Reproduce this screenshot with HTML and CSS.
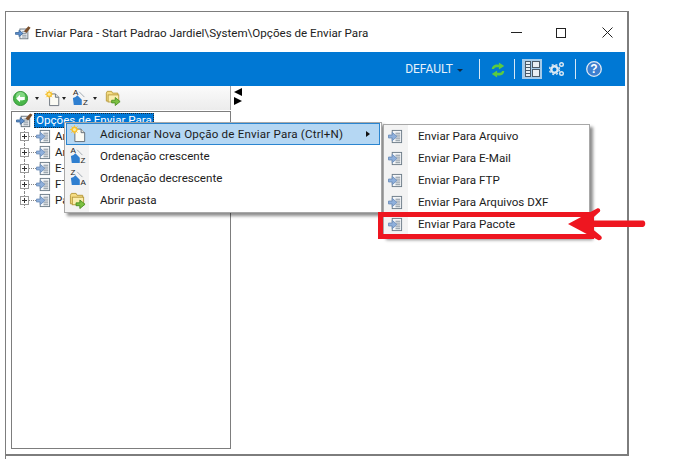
FILE: index.html
```html
<!DOCTYPE html>
<html lang="pt">
<head>
<meta charset="utf-8">
<title>Enviar Para</title>
<link rel="stylesheet" href="styles.css">
</head>
<body>
<svg class="defs" width="0" height="0">
  <defs>
    <symbol id="send" viewBox="0 0 16 16">
      <rect x="4.500" y="1.500" width="10" height="13" fill="#f4f6f8" stroke="#6d7c88"/>
      <path d="M8 4.500h5M8 6.500h5M9 8.500h4M8 10.500h5M8 12.500h5" stroke="#7f8c98"/>
      <path d="M0.500 6.500h4v-3l5 4.500-5 4.500v-3h-4z" fill="#8fb0dc" stroke="#6f90bc"/>
    </symbol>
    <symbol id="root" viewBox="0 0 18 18">
      <rect x="5.500" y="4.500" width="9" height="11" fill="#eef1f4" stroke="#66727c"/>
      <path d="M8 7.500h5M8 9.500h5M8 11.500h5M8 13.500h5" stroke="#7f8c98"/>
      <path d="M0.500 8.500h4v-2.500l4.500 3.500-4.500 3.500v-2.500h-4z" fill="#5f90cf" stroke="#3f6c9f"/>
      <path d="M10 7l5-5.500 2.500 1.500-4.500 6z" fill="#7a4f2c"/>
    </symbol>
    <symbol id="new" viewBox="0 0 18 20">
      <path d="M5.500 4.500h7l4 4v10h-11z" fill="#fbfbf4" stroke="#5a6470"/>
      <path d="M12.500 4.500v4h4" fill="#e3e3da" stroke="#5a6470"/>
      <circle cx="5" cy="5" r="3.500" fill="#f6c12f"/>
      <path d="M5 0v10M0 5h10M1.500 1.500l7 7M8.500 1.500l-7 7" stroke="#f6c12f"/>
      <circle cx="5" cy="5" r="1.800" fill="#fdeb9a"/>
    </symbol>
    <symbol id="folder" viewBox="0 0 18 18">
      <path d="M1.500 3.500l1-2h5l1 2h6v9h-13z" fill="#f6dd83" stroke="#b79a3a"/>
      <rect x="3.500" y="5.500" width="12" height="8" fill="#fbeeae" stroke="#b79a3a"/>
      <path d="M7.500 11.500h4v-3l5.500 4.500-5.500 4.500v-3h-4z" fill="#7cc142" stroke="#4d8f23"/>
    </symbol>
    <symbol id="back" viewBox="0 0 16 16">
      <circle cx="8" cy="8" r="7.500" fill="#49b649" stroke="#2f8f35"/>
      <circle cx="8" cy="6" r="5" fill="#84d884"/>
      <path d="M3.500 8l4-4v2.500h5v3h-5v2.500z" fill="#fff"/>
    </symbol>
    <symbol id="refresh" viewBox="0 0 18 18">
      <path d="M2 8c0-4 4-6 8-5V0.500l6 4-6 4V6C7 5.500 5 6 4.500 8z" fill="#5ccb3f"/>
      <path d="M16 10c0 4-4 6-8 5v2.500l-6-4 6-4V12c3 .5 5 0 5.500-2z" fill="#5ccb3f"/>
    </symbol>
    <symbol id="layout" viewBox="0 0 20 20">
      <rect width="20" height="20" fill="#a6cbe9"/>
      <rect x="3.500" y="2.500" width="5" height="15" fill="#e8eef3" stroke="#4a5a68"/>
      <rect x="10.500" y="2.500" width="7" height="6" fill="#e8eef3" stroke="#4a5a68"/>
      <rect x="10.500" y="10.500" width="7" height="7" fill="#e8eef3" stroke="#4a5a68"/>
      <path d="M4 5.500h4M4 8.500h4M4 11.500h4M4 14.500h4" stroke="#4a5a68"/>
    </symbol>
    <symbol id="gears" viewBox="0 0 16 16">
      <circle cx="5.500" cy="8.500" r="3.200" fill="none" stroke="#dbe8f2" stroke-width="2.400"/>
      <circle cx="5.500" cy="8.500" r="5" fill="none" stroke="#dbe8f2" stroke-width="1.400" stroke-dasharray="2 2"/>
      <circle cx="12.500" cy="3.500" r="1.800" fill="none" stroke="#dbe8f2" stroke-width="1.400"/>
      <circle cx="12.500" cy="12.500" r="1.800" fill="none" stroke="#dbe8f2" stroke-width="1.400"/>
    </symbol>
    <symbol id="help" viewBox="0 0 16 16">
      <circle cx="8" cy="8" r="7.300" fill="#3d7fd0" stroke="#dfe9f4" stroke-width="1.300"/>
    </symbol>
    <symbol id="az" viewBox="0 0 18 18">
      <path d="M1 9l3-1 2-2 5 5v6H2z" fill="#2f7fd0"/>
      <path d="M8 2l6 6" stroke="#9aa4ad"/>
    </symbol>
  </defs>
</svg>

<div class="window">
  <header class="titlebar">
    <svg class="title-icon"><use href="#root"/></svg>
    <span class="title-text">Enviar Para - Start Padrao Jardiel\System\Opções de Enviar Para</span>
    <div class="controls">
      <span class="ctl ctl-min"></span>
      <span class="ctl ctl-max"></span>
      <svg class="ctl-close" viewBox="0 0 11 11"><path d="M0.500 0.500l10 10M10.500 0.500l-10 10" stroke="#222" fill="none"/></svg>
    </div>
  </header>

  <div class="band">
    <span class="profile">DEFAULT</span>
    <span class="caret-white"></span>
    <span class="sep sep-a"></span>
    <svg class="b-icon"><use href="#refresh"/></svg>
    <span class="sep"></span>
    <svg class="b-layout"><use href="#layout"/></svg>
    <svg class="b-gears"><use href="#gears"/></svg>
    <span class="sep sep-c"></span>
    <span class="b-help"><svg class="b-help-bg"><use href="#help"/></svg><b class="q">?</b></span>
  </div>

  <div class="body">
    <aside class="left">
      <div class="tools">
        <svg class="t-back"><use href="#back"/></svg>
        <span class="caret"></span>
        <svg class="t-new"><use href="#new"/></svg>
        <span class="caret caret-tight"></span>
        <span class="az az-tool"><svg class="az-svg"><use href="#az"/></svg><i class="az-top">A</i><i class="az-bot">Z</i></span>
        <span class="caret caret-az"></span>
        <svg class="t-folder"><use href="#folder"/></svg>
      </div>
      <div class="tree">
        <div class="node-root">
          <svg class="root-icon"><use href="#root"/></svg>
          <span class="root-label">Opções de Enviar Para</span>
        </div>
        <div class="node"><span class="plus"></span><span class="dots"></span><svg class="n-icon"><use href="#send"/></svg><span>Arquivo</span></div>
        <div class="node"><span class="plus"></span><span class="dots"></span><svg class="n-icon"><use href="#send"/></svg><span>Arquivos DXF</span></div>
        <div class="node"><span class="plus"></span><span class="dots"></span><svg class="n-icon"><use href="#send"/></svg><span>E-Mail</span></div>
        <div class="node"><span class="plus"></span><span class="dots"></span><svg class="n-icon"><use href="#send"/></svg><span>FTP</span></div>
        <div class="node"><span class="plus"></span><span class="dots"></span><svg class="n-icon"><use href="#send"/></svg><span>Pacote</span></div>
      </div>
    </aside>
    <div class="splitter">
      <span class="tri-left"></span>
      <span class="tri-right"></span>
    </div>
  </div>
</div>
<span class="left-tail"></span>

<nav class="menu menu-main">
  <div class="item active">
    <span class="gutter"><svg class="m-new"><use href="#new"/></svg></span>
    <span class="label">Adicionar Nova Opção de Enviar Para (Ctrl+N)</span>
    <span class="sub-arrow"></span>
  </div>
  <div class="item">
    <span class="gutter"><span class="az"><svg class="az-svg"><use href="#az"/></svg><i class="az-top">A</i><i class="az-bot">Z</i></span></span>
    <span class="label">Ordenação crescente</span>
  </div>
  <div class="item">
    <span class="gutter"><span class="az"><svg class="az-svg"><use href="#az"/></svg><i class="az-top">Z</i><i class="az-bot">A</i></span></span>
    <span class="label">Ordenação decrescente</span>
  </div>
  <div class="item">
    <span class="gutter"><svg class="m-folder"><use href="#folder"/></svg></span>
    <span class="label">Abrir pasta</span>
  </div>
</nav>

<nav class="menu menu-sub">
  <div class="item"><span class="gutter"><svg class="m-send"><use href="#send"/></svg></span><span class="label">Enviar Para Arquivo</span></div>
  <div class="item"><span class="gutter"><svg class="m-send"><use href="#send"/></svg></span><span class="label">Enviar Para E-Mail</span></div>
  <div class="item"><span class="gutter"><svg class="m-send"><use href="#send"/></svg></span><span class="label">Enviar Para FTP</span></div>
  <div class="item"><span class="gutter"><svg class="m-send"><use href="#send"/></svg></span><span class="label">Enviar Para Arquivos DXF</span></div>
  <div class="item"><span class="gutter"><svg class="m-send"><use href="#send"/></svg></span><span class="label">Enviar Para Pacote</span></div>
</nav>

<span class="highlight"></span>
<svg class="red-arrow" viewBox="0 0 82 38"><path d="M2 19L31 3.500c2-1 4 1 3 3L24 15.500H77c3 0 3 6 0 6.500H24L35 31c2 2 0 5-3 4z" fill="#ee1620"/></svg>
</body>
</html>
```
FILE: styles.css
```css
* { box-sizing: border-box; }
html, body { margin: 0; padding: 0; }
body {
  width: 676px;
  height: 465px;
  overflow: hidden;
  position: relative;
  background: #fff;
  font-family: Roboto, "Open Sans", sans-serif;
  font-size: 11.6px;
  color: #1c1c1c;
}
.defs { position: absolute; }

.window {
  margin: 11px 0 0 5px;
  width: 624px;
  height: 445px;
  border: 1px solid #7d7d7d;
  border-bottom-width: 2px;
  border-right-width: 2px;
  display: flex;
  flex-direction: column;
  padding: 0 2px 0 5px;
}
.left-tail {
  position: absolute;
  left: 5px;
  top: 456px;
  width: 1px;
  height: 3px;
  background: #7d7d7d;
}

.titlebar {
  height: 40px;
  display: flex;
  align-items: center;
  padding-top: 1px;
}
.title-icon { width: 16px; height: 16px; margin-left: 4px; flex: none; }
.title-text { margin-left: 4px; white-space: nowrap; color: #222; }
.controls { margin-left: auto; display: flex; align-items: center; margin-right: 12px; }
.ctl-min { width: 11px; height: 1px; background: #222; }
.ctl-max { width: 10px; height: 10px; border: 1px solid #222; margin-left: 34px; }
.ctl-close { width: 11px; height: 11px; margin-left: 36px; }

.band {
  height: 34px;
  background: #0078d4;
  display: flex;
  align-items: center;
  justify-content: flex-end;
  padding-right: 23px;
  color: #e6f1fa;
}
.profile { font-size: 12px; }
.caret-white {
  width: 0; height: 0;
  margin: 2px 0 0 4px;
  border: 3px solid transparent;
  border-top: 3px solid #102a44;
  border-bottom: 0;
}
.sep { width: 1px; height: 20px; background: #d5e8f6; }
.sep-a { margin-left: 16px; }
.b-icon { width: 16px; height: 16px; margin: 1px 8px 0 10px; }
.b-layout { width: 20px; height: 20px; margin: 0 0 0 7px; }
.b-gears { width: 16px; height: 16px; margin-left: 7px; }
.sep-c { margin-left: 10px; }
.b-help { position: relative; width: 16px; height: 16px; margin-left: 10px; display: flex; align-items: center; justify-content: center; }
.b-help-bg { position: absolute; left: 0; top: 0; width: 16px; height: 16px; }
.q { position: relative; color: #fff; font: bold 12px "Liberation Sans", sans-serif; }

.body { flex: 1; display: flex; min-height: 0; }
.left { width: 220px; display: flex; flex-direction: column; padding-bottom: 5px; }
.tools {
  height: 24px;
  display: flex;
  align-items: center;
  padding-left: 2px;
  background: linear-gradient(#fbfbfb, #ececec);
  border-right: 1px solid #a0a0a0;
}
.t-back { width: 15px; height: 15px; flex: none; }
.caret {
  width: 0; height: 0;
  margin: 1px 0 0 7px;
  border: 2.500px solid transparent;
  border-top: 3px solid #222;
  border-bottom: 0;
}
.caret-tight { margin-left: 2px; }
.caret-az { margin-left: 5px; }
.t-new { width: 15px; height: 17px; margin-left: 6px; flex: none; }
.t-folder { width: 16px; height: 16px; margin-left: 8px; flex: none; }
.az { position: relative; display: block; width: 16px; height: 16px; flex: none; }
.az-tool { margin-left: 6px; }
.az-svg { position: absolute; left: 0; top: 0; width: 16px; height: 16px; }
.az i { position: absolute; font: normal 8px "Liberation Sans", sans-serif; color: #222; line-height: 8px; }
.az-top { left: 1px; top: -1px; }
.az-bot { left: 11px; top: 9px; }

.tree {
  flex: 1;
  margin-top: 1px;
  border: 1px solid #7d7d7d;
  background: #fff;
  padding: 0 0 0 4px;
}
.node-root { height: 16px; display: flex; align-items: center; }
.root-icon { width: 17px; height: 17px; flex: none; }
.root-label {
  margin-left: 1px;
  padding: 0 2px;
  height: 15px;
  line-height: 15px;
  background: #0078d7;
  color: #fff;
  outline: 1px dotted #1c2b3a;
  outline-offset: -1px;
  white-space: nowrap;
}
.node { height: 16px; display: flex; align-items: center; white-space: nowrap; position: relative; padding-left: 4px; }
.node::before {
  content: "";
  position: absolute;
  left: 8px;
  top: 0;
  height: 16px;
  border-left: 1px dotted #888;
}
.plus {
  position: relative;
  width: 9px; height: 9px;
  border: 1px solid #9a9a9a;
  flex: none;
  background:
    linear-gradient(#333, #333) center / 5px 1px no-repeat,
    linear-gradient(#333, #333) center / 1px 5px no-repeat,
    #fff;
}
.dots { width: 7px; border-top: 1px dotted #888; flex: none; }
.n-icon { width: 15px; height: 15px; margin-right: 4px; flex: none; }

.splitter { width: 14px; display: flex; flex-direction: column; align-items: flex-start; padding: 2px 0 0 3px; gap: 1px; }
.tri-left, .tri-right { width: 0; height: 0; border: 4px solid transparent; }
.tri-left { border-right: 8px solid #000; border-left: 0; }
.tri-right { border-left: 8px solid #000; border-right: 0; }

.menu {
  position: absolute;
  background: linear-gradient(90deg, #f3f3f3 0 24px, #fff 24px);
  border: 1px solid #a8a8a8;
  box-shadow: 3px 3px 3px rgba(0,0,0,.45);
  padding: 0 1px;
}
.menu-main { left: 64px; top: 122px; width: 318px; height: 91px; }
.menu-sub { left: 383px; top: 124px; width: 207px; height: 113px; }
.item { height: 22px; display: flex; align-items: center; border: 1px solid transparent; position: relative; }
.item.active { background: #b5d7f3; border-color: #2a85d0; }
.active .label { letter-spacing: .18px; }
.gutter { width: 21px; display: flex; align-items: center; justify-content: center; flex: none; }
.menu-sub .gutter { width: 19px; }
.label { margin-left: 12px; white-space: nowrap; }
.menu-sub .label { margin-left: 13px; }
.m-new { width: 16px; height: 18px; }
.m-folder { width: 17px; height: 17px; }
.m-send { width: 15px; height: 15px; }
.sub-arrow {
  position: absolute; right: 9px; top: 7px;
  width: 0; height: 0;
  border: 3.500px solid transparent;
  border-left: 4px solid #111;
  border-right: 0;
}

.highlight {
  position: absolute;
  left: 378px; top: 212px;
  width: 216px; height: 27px;
  border: 5px solid #ee1620;
}
.red-arrow {
  position: absolute;
  left: 566px; top: 205px;
  width: 82px; height: 38px;
}
```
